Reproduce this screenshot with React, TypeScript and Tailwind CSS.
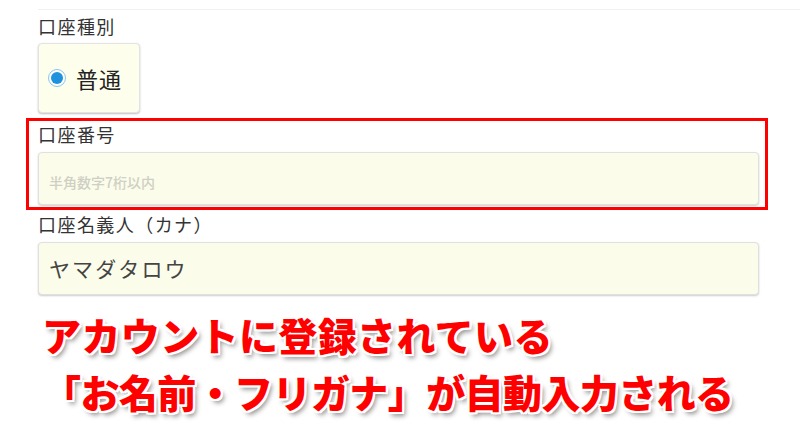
import React from 'react';

const jp = "font-['Noto_Sans_CJK_JP','Noto_Sans',sans-serif]";

const Label: React.FC<{ text: string }> = ({ text }) => (
  <div className="h-6 text-[18px] leading-6 tracking-[0.08em] text-[#333]">{text}</div>
);

const App: React.FC = () => {
  return (
    <div className={`h-[434px] w-[800px] overflow-hidden bg-white ${jp}`}>
      <div className="h-[9px]" />
      <div className="ml-[38px] h-px bg-[#f0f0f0]" />
      <div className="flex flex-col pl-[38px] pt-[4px]">
        <Label text="口座種別" />

        {/* account type */}
        <div className="mt-[5px] flex h-[70px] w-[102px] items-center gap-[10px] rounded-[4px] border border-[#e3e3e3] bg-[#fefeec] pl-[9px] shadow-[0_1px_2px_rgba(0,0,0,0.25)]">
          <span className="flex h-[18px] w-[18px] items-center justify-center rounded-full border border-[#8cc4ea] bg-white">
            <span className="h-[12px] w-[12px] rounded-full bg-[#1e92dc]" />
          </span>
          <span className="text-[22px] tracking-[0.04em] text-[#222]">普通</span>
        </div>

        {/* account number (highlighted) */}
        <div className="mt-[5px] ml-[-12px] w-[742px] border-[3px] border-[#ff0000] pb-[2px] pl-[9px]">
          <div className="mt-px">
            <Label text="口座番号" />
          </div>
          <div className="mt-[6px] flex h-[53px] w-[721px] items-center rounded-[4px] border border-[#e0e0e0] bg-[#fbfdea] pl-[10px] pt-[8px] shadow-[0_1px_2px_rgba(0,0,0,0.2)]">
            <span className="text-[14px] font-medium text-[#cfcfc4]">半角数字7桁以内</span>
          </div>
        </div>

        <div className="mt-[2px]">
          <Label text="口座名義人（カナ）" />
        </div>
        <div className="mt-[6px] flex h-[53px] w-[721px] items-center rounded-[4px] border border-[#e0e0e0] bg-[#fbfdea] pl-[10px] shadow-[0_1px_2px_rgba(0,0,0,0.2)]">
          <span className="text-[21px] tracking-[0.1em] text-[#444]">ヤマダタロウ</span>
        </div>

        {/* annotation */}
        <div className="mt-[11px] ml-[4px] text-[39px] font-black leading-[57px] text-[#ff0000] [text-shadow:2px_0_0_#fff,-2px_0_0_#fff,0_2px_0_#fff,0_-2px_0_#fff,2px_2px_0_#fff,-2px_-2px_0_#fff,2px_-2px_0_#fff,-2px_2px_0_#fff,3px_4px_5px_rgba(0,0,0,0.45)]">
          <div className="tracking-[0.01em]">アカウントに登録されている</div>
          <div className="tracking-[-0.015em]">「お名前・フリガナ」が自動入力される</div>
        </div>
      </div>
    </div>
  );
};

export default App;
